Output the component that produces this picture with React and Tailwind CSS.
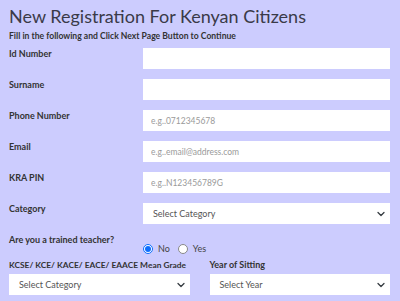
import React from "react";

const Chevron = () => (
  <svg
    className="pointer-events-none absolute right-[5px] top-1/2 -translate-y-1/2"
    width="8"
    height="8"
    viewBox="0 0 16 16"
  >
    <path
      d="M2 5l6 6 6-6"
      fill="none"
      stroke="#343a40"
      strokeWidth="2.5"
      strokeLinecap="round"
      strokeLinejoin="round"
    />
  </svg>
);

const Select = ({ text }) => (
  <div className="relative h-[21px] w-full bg-white">
    <div className="flex h-full items-center pl-[10px] text-[9px] text-[#555]">
      {text}
    </div>
    <Chevron />
  </div>
);

const Row = ({ label, placeholder, children }) => (
  <div className="flex h-[31px]">
    <div className="w-[134px] text-[9px] leading-[12px] font-bold text-[#333]">
      {label}
    </div>
    <div className="flex-1">
      {children || (
        <input
          className="block h-[21px] w-full bg-white px-[8px] text-[8.5px] outline-none placeholder:text-[#9a9a9a]"
          placeholder={placeholder}
        />
      )}
    </div>
  </div>
);

const Radio = ({ checked, label }) => (
  <label className="flex items-center gap-[5px] text-[9px] text-[#444]">
    <span
      className={
        checked
          ? "flex h-[10px] w-[10px] items-center justify-center rounded-full border border-[#0d6efd] bg-white"
          : "h-[10px] w-[10px] rounded-full border border-[#888] bg-white"
      }
    >
      {checked && <span className="h-[6px] w-[6px] rounded-full bg-[#0d6efd]" />}
    </span>
    {label}
  </label>
);

export default function App() {
  return (
    <div
      className="h-[301px] w-[400px] overflow-hidden bg-[#ccccfe] pl-[9px] pr-[10px]"
      style={{ fontFamily: '"Lato", "Liberation Sans", sans-serif' }}
    >
      <h1 className="pt-[3px] text-[18px] leading-[26px] text-[#3a3a48]">
        New Registration For Kenyan Citizens
      </h1>
      <p className="text-[8.6px] font-bold leading-[14px] text-[#333]">
        Fill in the following and Click Next Page Button to Continue
      </p>
      <div className="mt-[5px]">
        <Row label="Id Number" />
        <Row label="Surname" />
        <Row label="Phone Number" placeholder="e.g..0712345678" />
        <Row label="Email" placeholder="e.g..email@address.com" />
        <Row label="KRA PIN" placeholder="e.g..N123456789G" />
        <Row label="Category">
          <Select text="Select Category" />
        </Row>
        <div className="flex h-[25px]">
          <div className="w-[134px] text-[9px] leading-[12px] font-bold text-[#333]">
            Are you a trained teacher?
          </div>
          <div className="flex gap-[8px] pt-[5px]">
            <Radio checked label="No" />
            <Radio label="Yes" />
          </div>
        </div>
        <div className="grid grid-cols-2 gap-[20px]">
          <div>
            <div className="mb-[3px] whitespace-nowrap text-[8.4px] leading-[12px] font-bold text-[#333]">
              KCSE/ KCE/ KACE/ EACE/ EAACE Mean Grade
            </div>
            <Select text="Select Category" />
          </div>
          <div>
            <div className="mb-[3px] text-[9px] leading-[12px] font-bold text-[#333]">
              Year of Sitting
            </div>
            <Select text="Select Year" />
          </div>
        </div>
      </div>
    </div>
  );
}
